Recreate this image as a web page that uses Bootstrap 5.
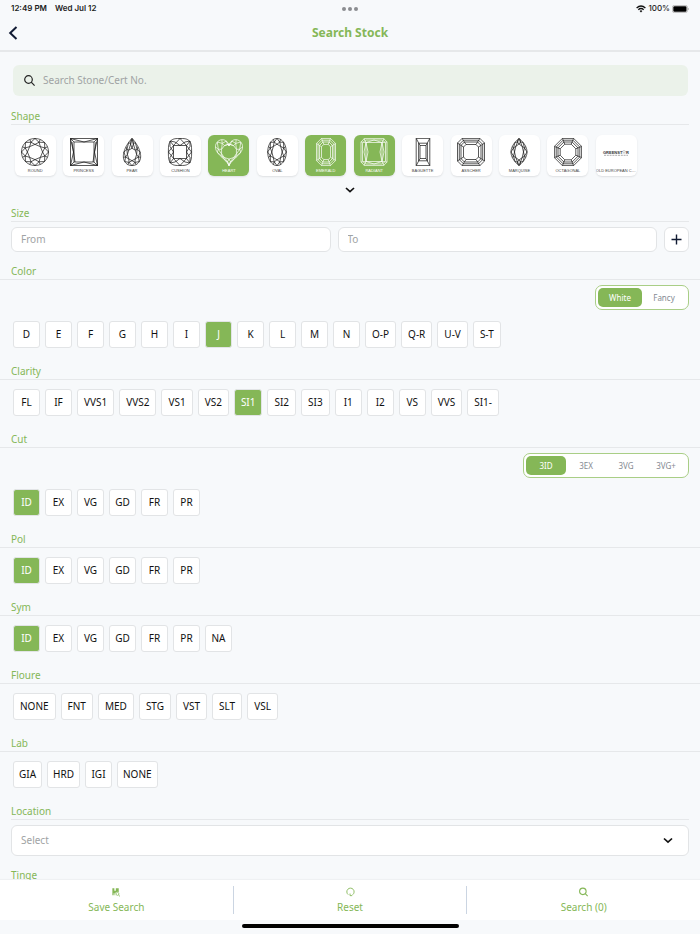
<!DOCTYPE html>
<html lang="en">
<head>
<meta charset="utf-8">
<meta name="viewport" content="width=device-width, initial-scale=1">
<title>Search Stock</title>
<link rel="stylesheet" href="https://cdn.jsdelivr.net/npm/bootstrap@5.3.0/dist/css/bootstrap.min.css">
<style>
:root { --green: #85b757; --page: #f7f9fb; --line: #e6e8ea; --edge: 11px; }
body { font-family: "Noto Sans", sans-serif; font-size: 10px; line-height: 14px; background: var(--page); color: #111; }
button, input, select { font-family: inherit; }
svg { display: block; }
.status-bar { height: 17px; padding: 0 11px; font: 600 8px/17px Inter, sans-serif; color: #1c1c1c; }
.status-side { flex: 1 1 0; }
.status-icons { gap: 2px; }
.dots { gap: 2px; }
.dots i { width: 4px; height: 4px; border-radius: 50%; background: #8b8d90; }
.title-bar { height: 35px; border-bottom: 2px solid var(--line); padding: 0 8px; }
.title-bar h1 { font-size: 12px; line-height: 16px; font-weight: 700; color: var(--green); }
.bar-side { width: 16px; }
.icon-btn { background: none; border: 0; padding: 0; }
.content { min-height: 0; }
.search-box { margin: 13px 12px 13px 13px; height: 31px; padding: 0 11px; gap: 8px; background: #ebf2ea; border-radius: 6px; }
.search-box input { font-size: 10px; line-height: 14px; background: none; border: 0; outline: 0; padding: 0; }
::placeholder { color: #a0a3a4 !important; opacity: 1; }
.sec-title { font-size: 10px; line-height: 14px; font-weight: 400; color: var(--green); margin: 0; padding: 0 0 1px var(--edge); border-bottom: 1px solid var(--line); }
.sec-title.inset { margin: 0 var(--edge); padding-left: 0; }
.shape-grid { display: grid; grid-template-columns: repeat(14, 1fr); justify-items: center; margin: 10px var(--edge) 0; }
.shape-card { width: 41px; height: 41px; border: 0; border-radius: 6px; background: #fff; color: #111; padding: 3px 0 0; box-shadow: 0 1px 2px rgba(0,0,0,.1); overflow: hidden; }
.shape-card span { font: 4px/5px "Liberation Sans", sans-serif; color: #444; white-space: nowrap; text-overflow: ellipsis; overflow: hidden; width: 100%; margin-top: 2px; }
.shape-card.on { background: var(--green); color: #fff; }
.shape-card.on span { color: #fff; }
.shape-art { fill: none; stroke: currentColor; stroke-width: .7; stroke-linejoin: round; }
.more-btn { height: 28px; margin-bottom: 2px; }
.size-row { margin: 5px var(--edge) 12px; gap: 7px; }
.field { height: 25px; font-size: 10px; line-height: 14px; padding: 0 9px; background: #fff; border: 1px solid #e2e4e6; border-radius: 6px; color: #a0a3a4; }
.plus-btn { width: 25px; flex: none; padding: 0; }
.seg { width: max-content; height: 25px; margin: 5px var(--edge) 0 auto; padding: 2px; background: #fff; border: 1px solid #a9ce86; border-radius: 7px; }
.seg button { font-size: 8px; line-height: 12px; border: 0; background: none; color: #858a92; border-radius: 5px; padding: 1px 0 0; width: 44px; }
.seg.narrow button { width: 40px; }
.seg button.on { background: var(--green); color: #fff; }
.chips { padding: 9px 13px 16px; gap: 5px; }
.seg + .chips { padding-top: 11px; }
.chips button { min-width: 27px; height: 27px; padding: 0 6px; font-size: 10px; line-height: 14px; color: #111; background: #fff; border: 1px solid #e2e4e6; border-radius: 3px; }
.chips.tight button { padding: 0 5px; }
.chips button.on { background: var(--green); color: #fff; }
.pick { margin: 5px var(--edge) 12px; }
.pick select { height: 31px; appearance: none; }
.pick svg { right: 16px; top: 11px; pointer-events: none; }
.actions { background: #fff; height: 40px; padding: 6px 0; box-shadow: 0 -1px 1px rgba(0,0,0,.03); z-index: 1; }
.actions button { flex: 1 1 0; background: none; border: 0; padding: 1px 0 0; color: var(--green); gap: 3px; font-size: 10px; line-height: 14px; }
.actions button + button { border-left: 1px solid #cbd5e2; }
.home { height: 14px; padding-top: 4px; }
.home i { width: 31%; height: 4px; border-radius: 2px; background: #000; }
</style>
<script src="https://cdn.jsdelivr.net/npm/bootstrap@5.3.0/dist/js/bootstrap.bundle.min.js"></script>
</head>
<body class="d-flex flex-column vh-100 overflow-hidden">
<div class="status-bar d-flex align-items-center">
  <div class="status-side d-flex gap-2"><span>12:49 PM</span><span>Wed Jul 12</span></div>
  <div class="dots d-flex"><i></i><i></i><i></i></div>
  <div class="status-side status-icons d-flex justify-content-end align-items-center">
    <svg width="10" height="8" viewBox="0 0 10 8" fill="none" stroke="#111" stroke-width="1.3" aria-hidden="true"><path d="M.6 2.9Q5-1 9.400 2.900M2.300 4.700Q5 2.300 7.700 4.700"/><path d="M3.600 5.900Q5 4.700 6.400 5.900L5 7.400Z" fill="#111" stroke="none"/></svg>
    <span class="fw-medium">100%</span>
    <svg width="17" height="8" viewBox="0 0 17 8" aria-hidden="true"><rect x=".4" y=".4" width="15" height="7.200" rx="2" fill="#fff" stroke="#aaa" stroke-width=".8"/><rect x="1.300" y="1.300" width="13.200" height="5.400" rx="1.200"/><path d="M16.200 2.800v2.400q.8-.4.8-1.200t-.8-1.200" fill="#aaa"/></svg>
  </div>
</div>
<header class="title-bar d-flex align-items-center justify-content-between">
  <button class="icon-btn bar-side" aria-label="Back"><svg width="10" height="14" viewBox="0 0 10 14" fill="none" stroke="#111b33" stroke-width="2"><path d="M8.500 1 2.200 7l6.300 6"/></svg></button>
  <h1 class="m-0">Search Stock</h1>
  <div class="bar-side"></div>
</header>
<main class="content flex-fill overflow-hidden">
  <div class="search-box d-flex align-items-center">
    <svg width="11" height="11" viewBox="0 0 11 11" fill="none" stroke="#222" stroke-width="1.200" aria-hidden="true"><circle cx="4.500" cy="4.500" r="3.800"/><path d="m7.200 7.200 3.400 3.400"/></svg>
    <input class="flex-fill" type="search" placeholder="Search Stone/Cert No." aria-label="Search Stone/Cert No.">
  </div>

  <h2 class="sec-title inset">Shape</h2>
  <div class="shape-grid" id="shapes"></div>
  <button class="icon-btn more-btn d-flex align-items-center mx-auto" aria-label="Show more shapes"><svg width="10" height="6" viewBox="0 0 10 6" fill="none" stroke="#111" stroke-width="1.700"><path d="m1 1 4 3.700L9 1"/></svg></button>

  <h2 class="sec-title inset">Size</h2>
  <div class="size-row d-flex">
    <input class="field flex-fill w-50" placeholder="From" aria-label="Size from">
    <input class="field flex-fill w-50" placeholder="To" aria-label="Size to">
    <button class="field plus-btn d-flex align-items-center justify-content-center" aria-label="Add size"><svg width="11" height="11" viewBox="0 0 11 11" fill="none" stroke="#111b33" stroke-width="1.400"><path d="M5.500.5v10M.5 5.500h10"/></svg></button>
  </div>

  <h2 class="sec-title">Color</h2>
  <div class="seg d-flex"><button class="on">White</button><button>Fancy</button></div>
  <div class="chips d-flex flex-wrap">
    <button>D</button><button>E</button><button>F</button><button>G</button><button>H</button><button>I</button><button class="on">J</button><button>K</button><button>L</button><button>M</button><button>N</button><button>O-P</button><button>Q-R</button><button>U-V</button><button>S-T</button>
  </div>

  <h2 class="sec-title">Clarity</h2>
  <div class="chips d-flex flex-wrap">
    <button>FL</button><button>IF</button><button>VVS1</button><button>VVS2</button><button>VS1</button><button>VS2</button><button class="on">SI1</button><button>SI2</button><button>SI3</button><button>I1</button><button>I2</button><button>VS</button><button>VVS</button><button>SI1-</button>
  </div>

  <h2 class="sec-title">Cut</h2>
  <div class="seg narrow d-flex"><button class="on">3ID</button><button>3EX</button><button>3VG</button><button>3VG+</button></div>
  <div class="chips tight d-flex flex-wrap">
    <button class="on">ID</button><button>EX</button><button>VG</button><button>GD</button><button>FR</button><button>PR</button>
  </div>

  <h2 class="sec-title">Pol</h2>
  <div class="chips tight d-flex flex-wrap">
    <button class="on">ID</button><button>EX</button><button>VG</button><button>GD</button><button>FR</button><button>PR</button>
  </div>

  <h2 class="sec-title">Sym</h2>
  <div class="chips tight d-flex flex-wrap">
    <button class="on">ID</button><button>EX</button><button>VG</button><button>GD</button><button>FR</button><button>PR</button><button>NA</button>
  </div>

  <h2 class="sec-title">Floure</h2>
  <div class="chips d-flex flex-wrap">
    <button>NONE</button><button>FNT</button><button>MED</button><button>STG</button><button>VST</button><button>SLT</button><button>VSL</button>
  </div>

  <h2 class="sec-title">Lab</h2>
  <div class="chips tight d-flex flex-wrap">
    <button>GIA</button><button>HRD</button><button>IGI</button><button>NONE</button>
  </div>

  <h2 class="sec-title inset"><label for="location">Location</label></h2>
  <div class="pick position-relative">
    <select class="field w-100" id="location"><option>Select</option></select>
    <svg class="position-absolute" width="10" height="9" viewBox="0 0 10 9" fill="none" stroke="#111" stroke-width="1.700" aria-hidden="true"><path d="m1 2.500 4 3.700 4-3.700"/></svg>
  </div>

  <h2 class="sec-title inset">Tinge</h2>
</main>
<footer>
  <div class="actions d-flex position-relative">
    <button class="d-flex flex-column align-items-center"><svg width="10" height="11" viewBox="0 0 10 11" aria-hidden="true"><path fill="currentColor" d="M1 1.500h2.200v2.500h1.600v-2.500H8v4.200a2.600 2.600 0 0 0-3.700 3.500H3.400V6.800L2.400 7v2.200H1z"/><circle cx="6.600" cy="7.600" r="1.600" fill="none" stroke="currentColor" stroke-width=".8"/><path d="m7.800 8.800 1.500 1.500" stroke="currentColor"/></svg>Save Search</button>
    <button class="d-flex flex-column align-items-center"><svg width="11" height="11" viewBox="0 0 11 11" fill="none" stroke="currentColor" aria-hidden="true"><path d="M3 8.400A4 4 0 1 1 7.800 8.500" stroke-width="1"/><path d="M5 7.200v2.300h2.400" stroke-width="1"/></svg>Reset</button>
    <button class="d-flex flex-column align-items-center"><svg width="11" height="11" viewBox="0 0 11 11" fill="none" stroke="currentColor" stroke-width="1.200" aria-hidden="true"><circle cx="4.800" cy="4.800" r="3.600"/><path d="m7.400 7.400 2.700 2.700"/></svg><span>Search (0)</span></button>
  </div>
  <div class="home d-flex justify-content-center"><i></i></div>
</footer>
<script>
// Each outline is a closed curve around (14, 14); t runs from 0 to 2*PI clockwise from the top.
const sin = Math.sin, cos = Math.cos, PI = Math.PI;
const curves = {
  round: t => [14 + 13.5 * sin(t), 14 - 13.5 * cos(t)],
  oval: t => [14 + 9.3 * sin(t), 14 - 13.6 * cos(t)],
  pear: t => [14 + 11 * sin(t) * Math.pow(Math.abs(sin(t / 2)), .9), 14 - 13.6 * cos(t)],
  marquise: t => [14 + 8 * sin(t) * Math.abs(sin(t)), 14 - 13.6 * cos(t)],
  cushion: t => { const p = v => Math.sign(v) * Math.pow(Math.abs(v), .6); return [14 + 11.6 * p(sin(t)), 14 - 13.5 * p(cos(t))]; },
  heart: t => [14 + 13.6 * Math.pow(sin(t), 3), 12.6 - (13 * cos(t) - 5 * cos(2 * t) - 2 * cos(3 * t) - cos(4 * t)) * .92]
};
const path = (pts, close = true) => 'M' + pts.map(p => p.map(v => v.toFixed(2)).join(' ')).join('L') + (close ? 'Z' : '');
const seg = (...pts) => path(pts, false);

// Round-style cut: an elliptical table, with star facets and kites between it and the outline.
function brilliant(curve, rx, ry, cy = 14, n = 8) {
  const table = t => [14 + rx * sin(t), cy - ry * cos(t)];
  const mid = t => { const p = table(t), q = curve(t); return [(p[0] + q[0]) / 2, (p[1] + q[1]) / 2]; };
  let d = path(Array.from({ length: 72 }, (_, i) => curve(i * PI / 36)));
  for (let k = 0; k < n; k++) {
    const a = k * 2 * PI / n, b = a + PI / n, c = a + 2 * PI / n;
    d += seg(table(a), table(c)) + seg(table(a), mid(b), table(c));
    d += seg(curve(a), mid(b), curve(c)) + seg(mid(b), curve(b));
  }
  return d;
}
function cutRect(w, h, c) {
  const pts = [[14 - w + c, 14 - h], [14 + w - c, 14 - h], [14 + w, 14 - h + c], [14 + w, 14 + h - c], [14 + w - c, 14 + h], [14 - w + c, 14 + h], [14 - w, 14 + h - c], [14 - w, 14 - h + c]];
  return c ? pts : [pts[0], pts[1], pts[3], pts[5]];
}
// Step cut: nested outlines with their corners joined.
function stepped(list) {
  let d = list.map(p => path(p)).join('');
  list[0].forEach((p, i) => d += seg(p, list[list.length - 1][i]));
  return d;
}
const art = {
  ROUND: brilliant(curves.round, 7.6, 7.6),
  PRINCESS: 'M.5.5h27v27H.5zM4 4h20v20H4zM.5.5 4 4M27.500.5 24 4M.5 27.500 4 24M27.500 27.500 24 24M.5.5 14 4 27.500.5 24.500 14l3 13.500L14 24 .5 27.500 3.500 14zM2 4l3 20M26 4l-3 20',
  PEAR: brilliant(curves.pear, 4.6, 6.2, 16.5),
  CUSHION: path(Array.from({ length: 72 }, (_, i) => curves.cushion(i * PI / 36))) + 'M7.500 7.500h13v13h-13zM7.500 7.500 14 .5l6.500 7 5 6.500-5 6.500-6.500 7-6.500-7-5-6.500zM4 3l3.500 4.500M24 3l-3.500 4.500M4 25l3.500-4.500M24 25l-3.500-4.500M4 3l5 1 5 3.500L19 4l5-1M4 25l5-1 5-3.500 5 3.500 5 1M4 3v5.500L7.500 14 4 19.500V25M24 3v5.500L20.500 14l3.500 5.500V25',
  HEART: brilliant(curves.heart, 7.8, 7.4, 13.6, 10),
  OVAL: brilliant(curves.oval, 5.2, 7.8),
  EMERALD: stepped([cutRect(9.5, 13.6, 5), cutRect(8, 11.8, 4.2), cutRect(6.5, 10, 3.5), cutRect(4.5, 7.6, 2.3)]),
  RADIANT: path(cutRect(13, 13.6, 3.5)) + path(cutRect(11.5, 12, 3)) + 'M6 4.500h16v19H6zM4 .5l2 4-5-.5M24 .5l-2 4 5-.5M4 27.500l2-4-5 .5M24 27.500l-2-4 5 .5M6 4.500 14 2l8 2.500 2 9.500-2 9.500-8 2.500-8-2.500L4 14zM6 4.500 8 14l-2 9.500M22 4.500 20 14l2 9.500',
  BAGUETTE: stepped([cutRect(6.8, 13.6, 0), cutRect(4.4, 8.8, 0), cutRect(3, 6.5, 0)]),
  ASSCHER: stepped([cutRect(13.5, 13.6, 4.6), cutRect(11.7, 11.8, 4.2), cutRect(7.5, 7.5, 2.5)]) + path(cutRect(10, 10, 3.4)),
  MARQUISE: brilliant(curves.marquise, 4.5, 8),
  OCTAGONAL: stepped([13.6, 11.8, 10, 7.8].map(r => cutRect(r, r, r * .586)))
};
const selected = ['HEART', 'EMERALD', 'RADIANT'];
const card = (name, svg) => `<button class="shape-card d-flex flex-column align-items-center${selected.includes(name) ? ' on' : ''}" aria-pressed="${selected.includes(name)}">${svg}<span>${name}</span></button>`;
const brand = '<svg width="28" height="28" viewBox="0 0 28 28" aria-hidden="true"><g font-family="Liberation Sans" font-weight="700" font-size="4" fill="#333"><text x="1" y="15.500">GREENST</text><text x="24" y="15.500">R</text></g><path d="m22 12 .5 1.200 1.300.1-1 .8.3 1.300-1.100-.7-1.100.7.3-1.300-1-.8 1.300-.1z" fill="none" stroke="#777" stroke-width=".3"/><path d="M2 17.300h24" stroke="#888" stroke-width=".7" stroke-dasharray="2 .8"/></svg>';
document.getElementById('shapes').innerHTML =
  Object.keys(art).map(n => card(n, `<svg class="shape-art" width="28" height="28" viewBox="0 0 28 28" aria-hidden="true"><path d="${art[n]}"/></svg>`)).join('') +
  card('OLD EUROPEAN CUT', brand);
</script>
</body>
</html>
